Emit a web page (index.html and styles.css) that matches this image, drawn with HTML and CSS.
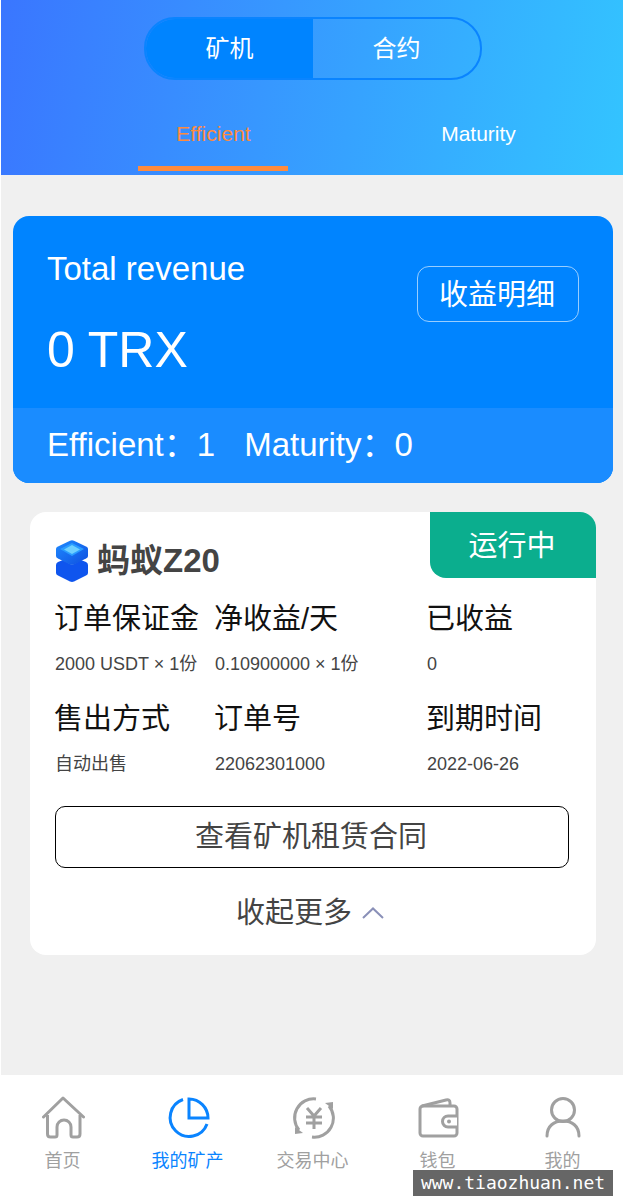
FILE: index.html
```html
<!DOCTYPE html>
<html lang="zh-CN">
<head>
    <meta charset="UTF-8">
    <meta name="viewport" content="width=device-width, initial-scale=1.0">
    <title>我的矿产</title>
    <link rel="stylesheet" href="styles.css">
</head>
<body>
    <div class="page">
        <header class="header">
            <div class="switch">
                <div class="switch-item active">矿机</div>
                <div class="switch-item">合约</div>
            </div>
            <div class="tabs">
                <div class="tab active">Efficient</div>
                <div class="tab">Maturity</div>
            </div>
        </header>

        <section class="revenue">
            <div class="revenue-top">
                <div>
                    <div class="revenue-title">Total revenue</div>
                    <div class="revenue-value">0 TRX</div>
                </div>
                <div class="detail-btn">收益明细</div>
            </div>
            <div class="revenue-bottom">
                <span>Efficient：1</span>
                <span>Maturity：0</span>
            </div>
        </section>

        <section class="card">
            <div class="badge">运行中</div>
            <div class="card-title">
                <svg class="logo" viewBox="0 0 34 42">
                    <defs>
                        <linearGradient id="cube" x1="0" y1="0" x2="1" y2="1">
                            <stop offset="0" stop-color="#1f8bff"/>
                            <stop offset="1" stop-color="#0f4fe0"/>
                        </linearGradient>
                    </defs>
                    <path d="M1 25 Q1 23 3 22 L8 20 L17 25 L26 20 L31 22 Q33 23 33 25 V33 Q33 34.500 31 35.500 L19 41.500 Q17 42.300 15 41.500 L3 35.500 Q1 34.500 1 33 Z" fill="#0f55ee"/>
                    <path d="M1 8.500 Q1 7.500 3 6.500 L15 .7 Q17 0 19 .7 L31 6.500 Q33 7.500 33 8.500 V16 Q33 17.500 31 18.500 L19 24.500 Q17 25.300 15 24.500 L3 18.500 Q1 17.500 1 16 Z" fill="url(#cube)"/>
                    <path d="M17 3 L29 9 L17 16 L5 9 Z" fill="#2a9dff"/>
                    <path d="M17 5 L25 9.500 L17 14 L9 9.500 Z" fill="#6fd0ff"/>
                </svg>
                <span>蚂蚁Z20</span>
            </div>
            <div class="info-grid">
                <div class="info">
                    <div class="info-label">订单保证金</div>
                    <div class="info-value">2000 USDT × 1份</div>
                </div>
                <div class="info">
                    <div class="info-label">净收益/天</div>
                    <div class="info-value">0.10900000 × 1份</div>
                </div>
                <div class="info">
                    <div class="info-label">已收益</div>
                    <div class="info-value">0</div>
                </div>
                <div class="info">
                    <div class="info-label">售出方式</div>
                    <div class="info-value">自动出售</div>
                </div>
                <div class="info">
                    <div class="info-label">订单号</div>
                    <div class="info-value">22062301000</div>
                </div>
                <div class="info">
                    <div class="info-label">到期时间</div>
                    <div class="info-value">2022-06-26</div>
                </div>
            </div>
            <div class="contract-btn">查看矿机租赁合同</div>
            <div class="collapse">
                <span>收起更多</span>
                <svg class="chevron" viewBox="0 0 22 12">
                    <path d="M1 11 L11 1.500 L21 11" fill="none" stroke="#8a90b8" stroke-width="2"/>
                </svg>
            </div>
        </section>

        <nav class="nav">
            <div class="nav-item">
                <svg class="nav-icon" viewBox="0 0 44 44">
                    <path d="M2.500 21 L22 2 L42.500 21" fill="none" stroke="currentColor" stroke-width="3" stroke-linecap="round" stroke-linejoin="round"/>
                    <path d="M6.500 19 V38 Q6.500 41 9.500 41 H14 Q16 41 16 39 V31 A7 7 0 0 1 30 31 V39 Q30 41 32 41 H36 Q39 41 39 38 V19" fill="none" stroke="currentColor" stroke-width="3"/>
                </svg>
                <span>首页</span>
            </div>
            <div class="nav-item active">
                <svg class="nav-icon" viewBox="0 0 44 44">
                    <path d="M17 3.500 A19 19 0 1 0 41 28" fill="none" stroke="currentColor" stroke-width="3"/>
                    <path d="M23 3 V22 H42 A19 19 0 0 0 23 3 Z" fill="none" stroke="currentColor" stroke-width="3"/>
                </svg>
                <span>我的矿产</span>
            </div>
            <div class="nav-item">
                <svg class="nav-icon" viewBox="0 0 44 44">
                    <path d="M25 3 A19 19 0 0 0 8 34" fill="none" stroke="currentColor" stroke-width="3"/>
                    <path d="M4 31 L12 37 L4 38 Z" fill="currentColor"/>
                    <path d="M21 41 A19 19 0 0 0 38 10" fill="none" stroke="currentColor" stroke-width="3"/>
                    <path d="M42 13 L34 7 L42 6 Z" fill="currentColor"/>
                    <path d="M16 12 L23 20 L30 12 M23 20 V33 M15 21 H31 M15 27 H31" fill="none" stroke="currentColor" stroke-width="3"/>
                </svg>
                <span>交易中心</span>
            </div>
            <div class="nav-item">
                <svg class="nav-icon" viewBox="0 0 44 44">
                    <path d="M6 10 L30 4 Q34 3 34 7 V10" fill="none" stroke="currentColor" stroke-width="3" stroke-linejoin="round"/>
                    <rect x="4" y="10" width="37" height="30" rx="3" fill="none" stroke="currentColor" stroke-width="3"/>
                    <path d="M41 20 H32 A5 5 0 0 0 32 31 H41" fill="#fff" stroke="currentColor" stroke-width="3"/>
                    <circle cx="33" cy="25.500" r="2" fill="currentColor"/>
                </svg>
                <span>钱包</span>
            </div>
            <div class="nav-item">
                <svg class="nav-icon" viewBox="0 0 44 44">
                    <circle cx="22" cy="14" r="11.500" fill="none" stroke="currentColor" stroke-width="3"/>
                    <path d="M6 40 C6 30 13 25 22 25 C31 25 38 30 38 40" fill="none" stroke="currentColor" stroke-width="3" stroke-linecap="round"/>
                </svg>
                <span>我的</span>
            </div>
        </nav>
    </div>
    <div class="watermark">www.tiaozhuan.net</div>
</body>
</html>
```

FILE: styles.css
```css
* {
    box-sizing: border-box;
}
html, body {
    margin: 0;
    padding: 0;
    background-color: #fff;
}
body {
    font-family: "Liberation Sans", "Noto Sans CJK SC", sans-serif;
    color: #333;
    padding-left: 1px;
}
.page {
    display: flex;
    flex-direction: column;
    height: 1201px;
    background-color: #f0f0f0;
}

/* header */
.header {
    height: 175px;
    padding-top: 17px;
    background: linear-gradient(100deg, #3a76ff, #33c4ff);
    color: #fff;
}
.switch {
    display: flex;
    width: 338px;
    height: 63px;
    margin-left: 143px;
    border: 2px solid #0a84ff;
    border-radius: 31px;
    overflow: hidden;
}
.switch-item {
    flex: 1;
    font-size: 24px;
    line-height: 59px;
    text-align: center;
}
.switch-item.active {
    background-color: #0084ff;
}
.tabs {
    display: grid;
    grid-template-columns: 265px 265px;
    margin: 25px 0 0 80px;
}
.tab {
    position: relative;
    height: 66px;
    padding-top: 17px;
    font-size: 21px;
    text-align: center;
}
.tab.active {
    color: #ff8b3d;
}
.tab.active::after {
    content: "";
    position: absolute;
    left: 57px;
    bottom: 0;
    width: 150px;
    height: 5px;
    background-color: #ff8b3d;
}

/* revenue */
.revenue {
    width: 600px;
    height: 267px;
    margin: 41px 0 0 12px;
    border-radius: 16px;
    overflow: hidden;
    background-color: #0084ff;
    color: #fff;
}
.revenue-top {
    display: flex;
    justify-content: space-between;
    align-items: flex-start;
    height: 192px;
    padding: 33px 34px 0;
}
.revenue-title {
    font-size: 33px;
    line-height: 40px;
}
.revenue-value {
    margin-top: 30px;
    font-size: 50px;
    line-height: 62px;
}
.detail-btn {
    width: 162px;
    height: 56px;
    margin-top: 17px;
    padding-right: 2px;
    border: 1px solid rgba(255, 255, 255, 0.6);
    border-radius: 12px;
    font-size: 29px;
    line-height: 57px;
    text-align: center;
}
.revenue-bottom {
    display: flex;
    gap: 29px;
    height: 75px;
    padding-left: 34px;
    background-color: #1a8cff;
    font-size: 33px;
    line-height: 73px;
}

/* order card */
.card {
    position: relative;
    width: 566px;
    height: 443px;
    margin: 29px 0 0 29px;
    padding: 28px 27px 0 25px;
    border-radius: 16px;
    background-color: #fff;
}
.badge {
    position: absolute;
    top: 0;
    right: 0;
    width: 166px;
    height: 66px;
    padding-right: 2px;
    border-radius: 0 16px 0 16px;
    background-color: #0bae8e;
    color: #fff;
    font-size: 29px;
    line-height: 68px;
    text-align: center;
}
.card-title {
    display: flex;
    align-items: center;
    gap: 8px;
    height: 42px;
    color: #444;
    font-size: 33px;
    font-weight: bold;
}
.card-title span {
    padding-bottom: 6px;
}
.logo {
    width: 34px;
    height: 42px;
}
.info-grid {
    display: grid;
    grid-template-columns: 160px 212px 1fr;
    row-gap: 22px;
    margin-top: 16px;
}
.info-label {
    margin-left: -1px;
    color: #111;
    font-size: 29px;
    line-height: 42px;
    white-space: nowrap;
}
.info-value {
    margin-top: 12px;
    color: #444;
    font-size: 18px;
    line-height: 24px;
    white-space: nowrap;
}
.contract-btn {
    height: 62px;
    margin-top: 30px;
    padding-right: 2px;
    border: 1px solid #000;
    border-radius: 10px;
    color: #444;
    font-size: 29px;
    line-height: 60px;
    text-align: center;
}
.collapse {
    display: flex;
    justify-content: center;
    align-items: center;
    gap: 10px;
    margin: 23px 4px 0 0;
    color: #444;
    font-size: 29px;
    line-height: 44px;
}
.chevron {
    width: 22px;
    height: 12px;
}

/* bottom nav */
.nav {
    display: grid;
    grid-template-columns: repeat(5, 125px);
    height: 126px;
    margin-left: -1px;
    padding-top: 21px;
    margin-top: auto;
    background-color: #fff;
    color: #a0a0a0;
    font-size: 18px;
    text-align: center;
}
.nav-item {
    display: flex;
    flex-direction: column;
    align-items: center;
    gap: 6px;
}
.nav-item.active {
    color: #0a84ff;
}
.nav-icon {
    width: 44px;
    height: 44px;
}

.watermark {
    position: fixed;
    right: 10px;
    bottom: 5px;
    width: 200px;
    height: 26px;
    background-color: #666;
    color: #fff;
    font-family: "DejaVu Sans Mono", monospace;
    font-size: 18px;
    line-height: 26px;
    text-align: center;
}
```
